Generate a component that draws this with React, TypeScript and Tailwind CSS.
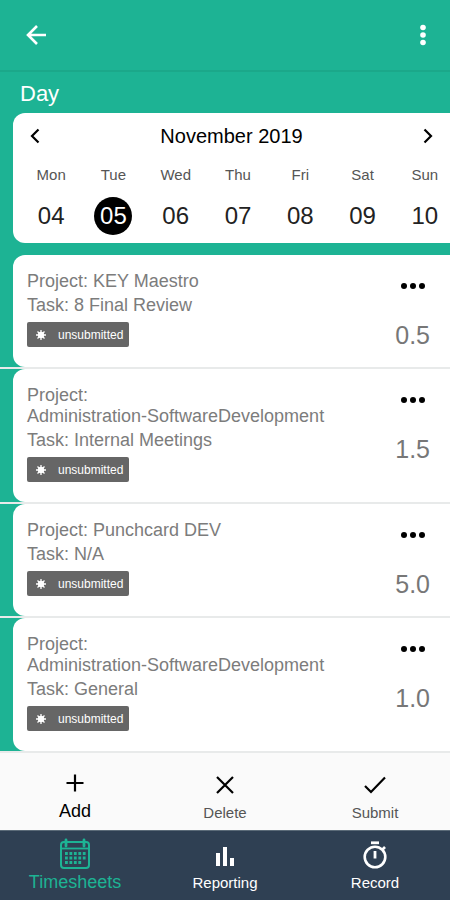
import React from "react";

const days = [
  { name: "Mon", date: "04" },
  { name: "Tue", date: "05", selected: true },
  { name: "Wed", date: "06" },
  { name: "Thu", date: "07" },
  { name: "Fri", date: "08" },
  { name: "Sat", date: "09" },
  { name: "Sun", date: "10" },
];

const entries = [
  { project: "KEY Maestro", task: "8 Final Review", hours: "0.5" },
  { project: "Administration-SoftwareDevelopment", task: "Internal Meetings", hours: "1.5" },
  { project: "Punchcard DEV", task: "N/A", hours: "5.0" },
  { project: "Administration-SoftwareDevelopment", task: "General", hours: "1.0" },
];

function Chevron({ d }: { d: string }) {
  return (
    <svg viewBox="0 0 10 16" className="h-4 w-2.5" fill="none" stroke="currentColor" strokeWidth="2.2">
      <path d={d} />
    </svg>
  );
}

function CalendarIcon() {
  return (
    <svg viewBox="0 0 32 32" className="h-8 w-8" fill="none" stroke="currentColor">
      <rect x="2" y="4" width="28" height="26" rx="3" strokeWidth="2" />
      <path d="M2 10.5h28" strokeWidth="1.8" />
      <path d="M7 2v6M25 2v6" strokeWidth="2.8" strokeLinecap="round" />
      <path d="M6 15.5h21M6 20h21M6 24.5h17" strokeWidth="2.8" strokeDasharray="2.8 1.65" />
    </svg>
  );
}

function BarsIcon() {
  return (
    <svg viewBox="0 0 20 20" className="h-5 w-5" fill="currentColor">
      <path d="M1 6h4v13H1zM8 0h4v19H8zM15 11h4v8h-4z" />
    </svg>
  );
}

function StopwatchIcon() {
  return (
    <svg viewBox="0 0 28 28" className="h-7 w-7" fill="none" stroke="currentColor">
      <circle cx="14" cy="16" r="10.3" strokeWidth="2.6" />
      <path d="M10 1.8h8" strokeWidth="2.8" />
      <path d="M14 10v7.5" strokeWidth="2.8" />
      <path d="M21.5 8.5l2.5-2.5" strokeWidth="2.6" />
    </svg>
  );
}

function EntryRow({ project, task, hours }: { project: string; task: string; hours: string }) {
  return (
    <li className="border-b-2 border-[#e8eaea] bg-[#1db394] pl-[13px]">
      <div className="flex justify-between rounded-l-xl bg-white pt-4 pr-5 pl-3.5">
        <div className="min-w-0 pb-5 text-lg text-[#7c7c7c]">
          <p className="flex max-w-[310px] flex-wrap gap-x-[5px] leading-[21px]">
            <span>Project:</span>
            <span className="whitespace-nowrap">{project}</span>
          </p>
          <p className="mt-0.5 leading-[22px]">Task: {task}</p>
          <span className="mt-1.5 flex h-[25px] w-[102px] items-center rounded-xs bg-[#666] pl-2 text-xs text-white">
            <svg viewBox="0 0 12 12" className="mr-[11px] h-3 w-3" stroke="currentColor" strokeWidth="1.3">
              <circle cx="6" cy="6" r="2.5" fill="currentColor" />
              <path d="M6 1v10M1 6h10M2.5 2.5l7 7M9.5 2.5l-7 7" />
            </svg>
            unsubmitted
          </span>
        </div>
        <div className="flex flex-col items-center pt-3">
          <button type="button" aria-label="Entry options" className="text-black">
            <svg viewBox="0 0 24 6" className="h-1.5 w-6" fill="currentColor">
              <circle cx="3" cy="3" r="3" />
              <circle cx="12" cy="3" r="3" />
              <circle cx="21" cy="3" r="3" />
            </svg>
          </button>
          <span className="mt-8 text-[25px] leading-7 text-[#777]">{hours}</span>
        </div>
      </div>
    </li>
  );
}

export default function App() {
  return (
    <div className="flex min-h-screen flex-col bg-[#1db394] font-['Liberation_Sans',Arial,sans-serif]">
      <header className="flex h-[72px] items-center justify-between border-b-2 border-[#1ba88a] pr-[17px] pl-6 text-white">
        <button type="button" aria-label="Back">
          <svg viewBox="0 0 24 24" className="h-6 w-6" fill="none" stroke="currentColor" strokeWidth="2.6">
            <path d="M22 12H4M13 3l-9 9 9 9" />
          </svg>
        </button>
        <button type="button" aria-label="More">
          <svg viewBox="0 0 20 24" className="h-6 w-5" fill="currentColor">
            <circle cx="10" cy="4.5" r="2.8" />
            <circle cx="10" cy="12" r="2.8" />
            <circle cx="10" cy="19.5" r="2.8" />
          </svg>
        </button>
      </header>

      <main className="flex-1">
        <h1 className="pt-2 pl-5 text-[22px] leading-7 text-white">Day</h1>

        {/* Week picker */}
        <section className="mt-[5px] ml-[13px] h-[130px] overflow-hidden rounded-l-xl bg-white text-black">
          <div className="flex h-[46px] items-center justify-between px-[17px]">
            <button type="button" aria-label="Previous week">
              <Chevron d="M8.5 1.5L2 8l6.5 6.5" />
            </button>
            <h2 className="text-xl">November 2019</h2>
            <button type="button" aria-label="Next week">
              <Chevron d="M1.5 1.5L8 8l-6.5 6.5" />
            </button>
          </div>
          <div className="-mr-1.5 grid grid-cols-7 pl-[7px]">
            {days.map((day) => (
              <button key={day.date} type="button" className="flex flex-col items-center">
                <span className="text-[15px] leading-8 text-[#555]">{day.name}</span>
                <span
                  className={
                    day.selected
                      ? "mt-1.5 flex h-[38px] w-[38px] items-center justify-center rounded-full bg-black text-2xl text-white"
                      : "mt-1.5 flex h-[38px] w-[38px] items-center justify-center text-2xl text-[#222]"
                  }
                >
                  {day.date}
                </span>
              </button>
            ))}
          </div>
        </section>

        <ul className="mt-3">
          {entries.map((entry, index) => (
            <EntryRow key={index} {...entry} />
          ))}
        </ul>
      </main>

      {/* Actions */}
      <div className="grid h-[77px] grid-cols-3 bg-[#fafafa] text-black">
        <button type="button" className="flex flex-col items-center justify-start pt-[18px]">
          <svg viewBox="0 0 24 24" className="h-6 w-6" stroke="currentColor" strokeWidth="2.2">
            <path d="M12 3.5v17M3.5 12h17" />
          </svg>
          <span className="mt-1 text-lg leading-6">Add</span>
        </button>
        <button type="button" className="flex flex-col items-center justify-start pt-5">
          <svg viewBox="0 0 24 24" className="h-6 w-6" stroke="currentColor" strokeWidth="2.2">
            <path d="M4 4l16 16M20 4L4 20" />
          </svg>
          <span className="mt-1 text-[15px] leading-6 text-[#555]">Delete</span>
        </button>
        <button type="button" className="flex flex-col items-center justify-start pt-5">
          <svg viewBox="0 0 24 24" className="h-6 w-6" fill="none" stroke="currentColor" strokeWidth="2.2">
            <path d="M2 13l6 6L22 4.5" />
          </svg>
          <span className="mt-1 text-[15px] leading-6 text-[#555]">Submit</span>
        </button>
      </div>

      <nav className="grid h-[70px] grid-cols-3 border-t border-[#5b6b78] bg-[#2f4053] text-[15px] text-white">
        <a href="#timesheets" className="flex flex-col items-center pt-[7px] text-lg text-[#1db394]">
          <CalendarIcon />
          <span className="leading-6">Timesheets</span>
        </a>
        <a href="#reporting" className="flex flex-col items-center pt-4">
          <BarsIcon />
          <span className="mt-1 leading-6">Reporting</span>
        </a>
        <a href="#record" className="flex flex-col items-center pt-2.5">
          <StopwatchIcon />
          <span className="mt-0.5 leading-6">Record</span>
        </a>
      </nav>
    </div>
  );
}
